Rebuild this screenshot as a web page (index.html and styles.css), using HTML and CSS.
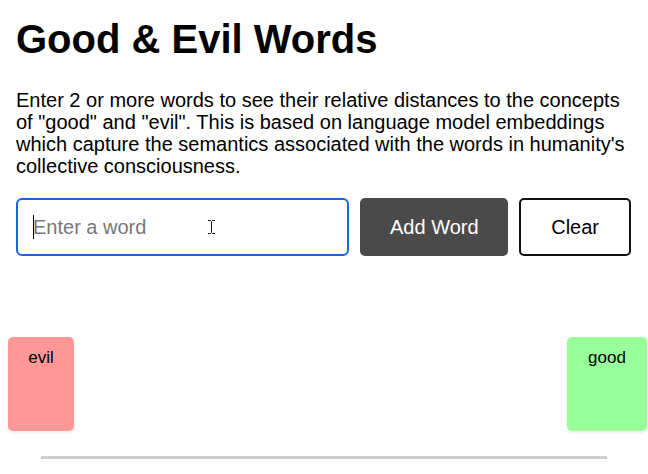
FILE: index.html
```html
<!DOCTYPE html>
<html>
<head>
<meta charset="utf-8">
<link rel="stylesheet" href="styles.css">
</head>
<body>
<main class="page">
  <h1 class="title">Good &amp; Evil Words</h1>
  <p class="intro">Enter 2 or more words to see their relative distances to the concepts of "good" and "evil". This is based on language model embeddings which capture the semantics associated with the words in humanity's collective consciousness.</p>
  <div class="controls">
    <div class="field">
      <span class="caret"></span>
      <span class="placeholder">Enter a word</span>
      <svg class="ibeam" width="9" height="16" viewBox="0 0 9 16"><path d="M1 1.5h2.5l1 1 1-1H8M4.5 2.5v11M1 14.5h2.5l1-1 1 1H8" fill="none" stroke="#fff" stroke-width="2.4"/><path d="M1 1.5h2.5l1 1 1-1H8M4.5 2.5v11M1 14.5h2.5l1-1 1 1H8" fill="none" stroke="#111" stroke-width="1"/></svg>
    </div>
    <button class="btn btn-add">Add Word</button>
    <button class="btn btn-clear">Clear</button>
  </div>
  <div class="track">
    <div class="card card-evil" style="left:8px">evil</div>
    <div class="card card-good" style="left:567px">good</div>
  </div>
  <div class="axis"></div>
</main>
</body>
</html>
```

FILE: styles.css
```css
html, body {
  margin: 0;
  padding: 0;
  background: #fff;
}
body {
  font-family: "Liberation Sans", Arial, sans-serif;
  color: #000;
}
.page {
  padding: 16px 17px 0 16px;
}
.title {
  margin: 0;
  font-size: 40px;
  font-weight: bold;
  line-height: 46px;
}
.intro {
  margin: 27px 0 0;
  font-size: 20px;
  line-height: 22px;
}
.controls {
  display: flex;
  gap: 11px;
  margin-top: 21px;
  height: 58px;
}
.field {
  position: relative;
  width: 334px;
  box-sizing: border-box;
  border: 2px solid #1a66d9;
  border-radius: 6px;
  display: flex;
  align-items: center;
  padding-left: 15px;
  font-size: 20px;
}
.caret {
  width: 1px;
  height: 24px;
  background: #000;
  margin-right: -1px;
}
.placeholder {
  color: #777;
}
.ibeam {
  position: absolute;
  left: 189px;
  top: 19px;
}
.btn {
  font-family: "Liberation Sans", Arial, sans-serif;
  font-size: 20px;
  border-radius: 5px;
  box-sizing: border-box;
  padding: 0;
}
.btn-add {
  width: 148px;
  background: #4a4a4a;
  color: #fff;
  border: none;
}
.btn-clear {
  width: 112px;
  background: #fff;
  color: #000;
  border: 2px solid #111;
}
.track {
  position: relative;
  height: 94px;
  margin: 81px -17px 0 -16px;
}
.card {
  position: absolute;
  top: 0;
  height: 94px;
  border-radius: 5px;
  box-sizing: border-box;
  padding-top: 11px;
  text-align: center;
  font-size: 17px;
  box-shadow: 0 2px 3px rgba(0, 0, 0, 0.08);
}
.card-evil {
  width: 66px;
  background: #ff9797;
}
.card-good {
  width: 80px;
  background: #99ff99;
}
.axis {
  height: 3px;
  background: #cccccc;
  margin: 25px 24px 0 25px;
}
```
